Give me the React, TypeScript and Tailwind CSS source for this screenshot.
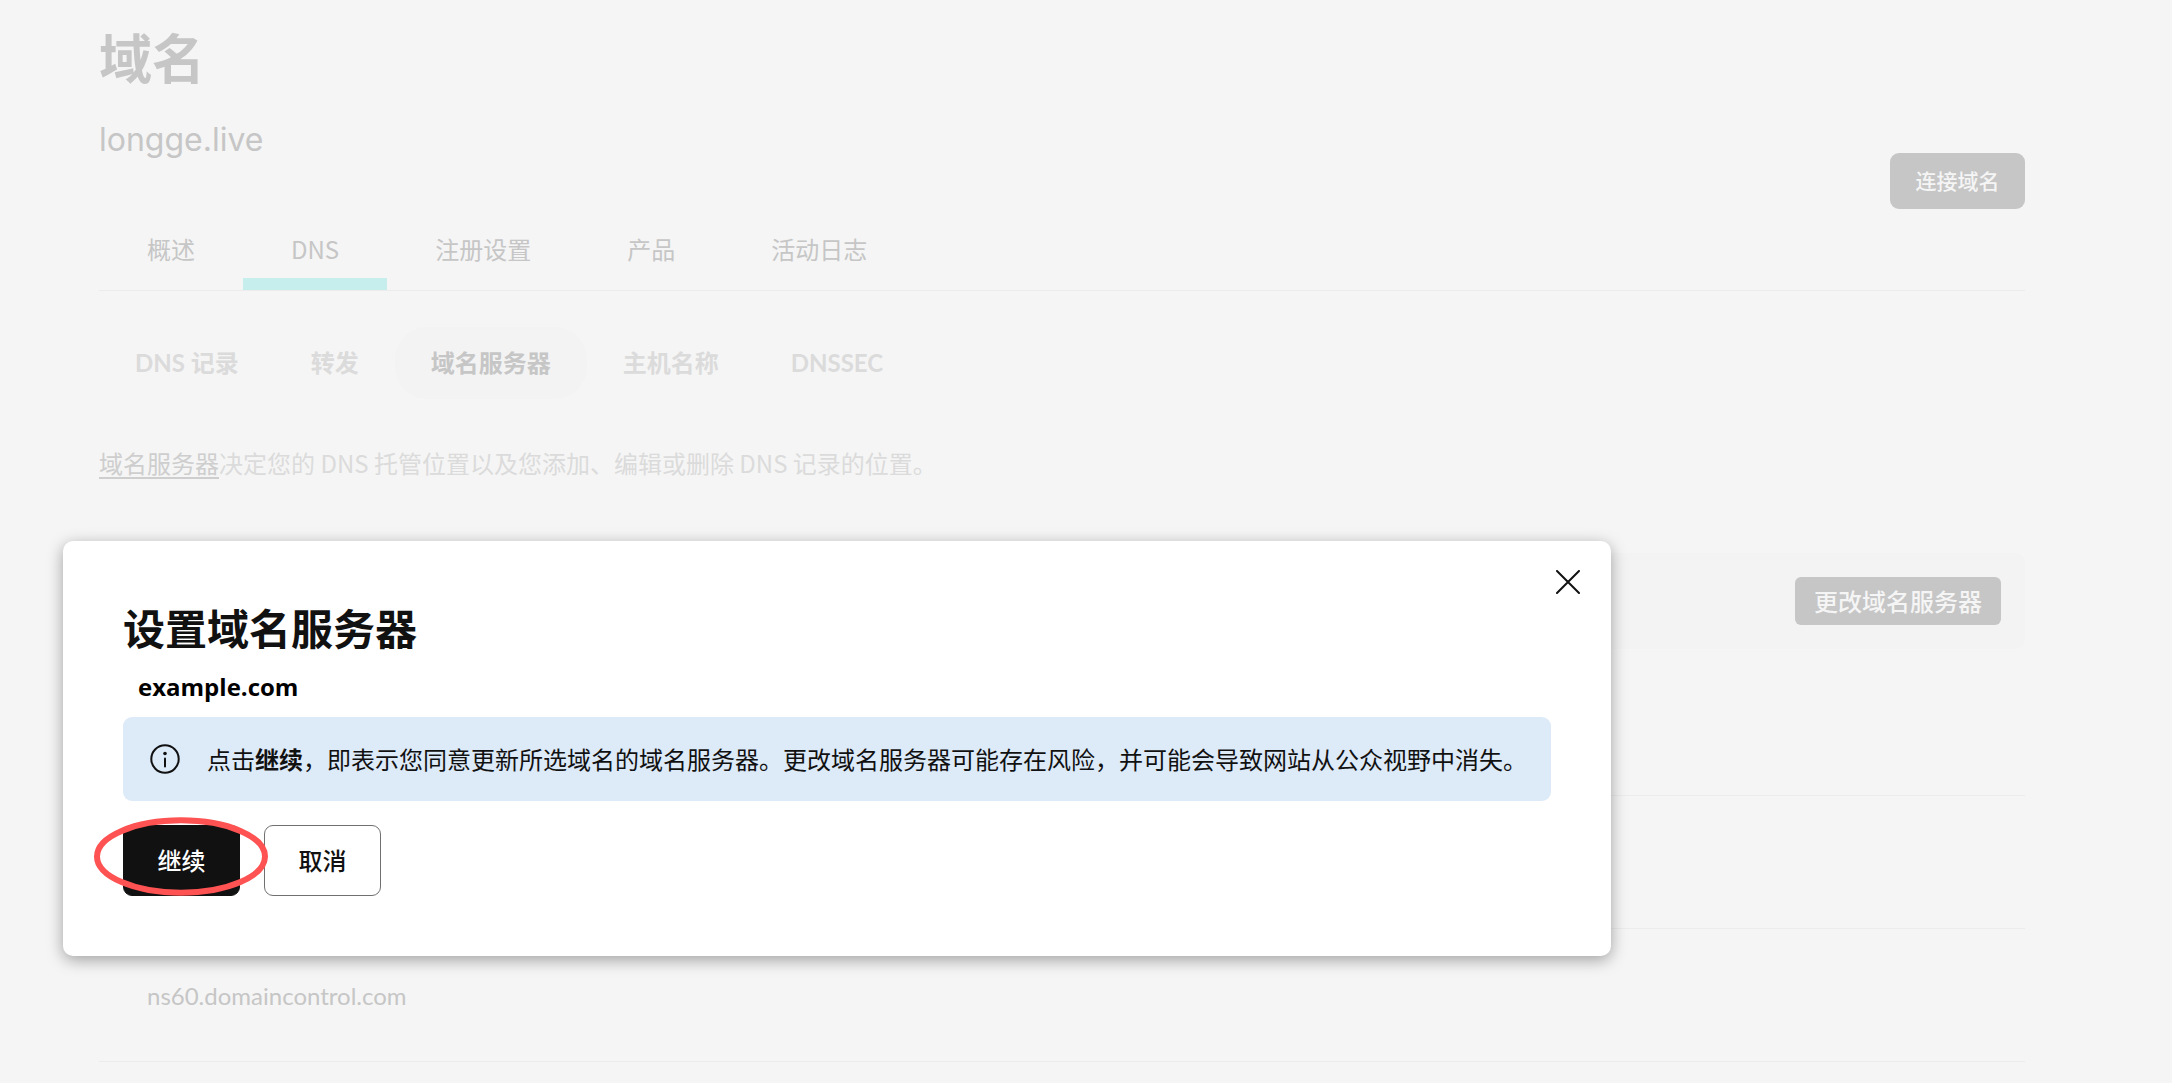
import React from "react";
import clsx from "clsx";

const tabs = ["概述", "DNS", "注册设置", "产品", "活动日志"];
const subTabs = ["DNS 记录", "转发", "域名服务器", "主机名称", "DNSSEC"];
const rows = ["", "", "ns60.domaincontrol.com"];

function ConfirmDialog() {
    return (
        <div
            role="dialog"
            aria-labelledby="dialogTitle"
            className="absolute left-[63px] top-[541px] w-[1548px] max-w-[calc(100%-126px)] rounded-[10px] bg-white p-[60px] text-[#111] shadow-[0_4px_16px_rgba(0,0,0,0.35)]"
        >
            <button aria-label="关闭" className="absolute right-[31px] top-[29px]">
                <svg className="block size-6" viewBox="0 0 24 24" fill="none" stroke="#111" strokeWidth="2" strokeLinecap="round">
                    <path d="M1 1l22 22M23 1L1 23" />
                </svg>
            </button>

            <h2 id="dialogTitle" className="text-[42px] leading-[52px] font-bold">
                设置域名服务器
            </h2>
            <p className="mt-4 pl-[15px] font-['Open_Sans',sans-serif] text-2xl leading-[36px] font-bold text-black">
                example.com
            </p>

            <div className="mt-3 flex min-h-[84px] items-center rounded-[9px] bg-[#ddeaf8] pl-[27px] pr-6">
                <svg className="size-[30px] shrink-0" viewBox="0 0 30 30" fill="none" stroke="#111" strokeWidth="2">
                    <circle cx="15" cy="15" r="13.7" />
                    <path d="M15 14.5v8" strokeLinecap="round" />
                    <circle cx="15" cy="9.5" r="1.8" fill="#111" stroke="none" />
                </svg>
                <p className="ml-[27px] text-2xl leading-9">
                    点击<strong>继续</strong>，即表示您同意更新所选域名的域名服务器。更改域名服务器可能存在风险，并可能会导致网站从公众视野中消失。
                </p>
            </div>

            <div className="mt-6 flex gap-6">
                <div className="relative">
                    <button className="h-[71px] min-w-[117px] rounded-[9px] border border-[#111] bg-[#111] px-8 pb-[2px] text-2xl font-medium text-white">
                        继续
                    </button>
                    <svg
                        className="pointer-events-none absolute -left-[29px] -top-2 h-[79px] w-[174px]"
                        viewBox="0 0 174 79"
                        fill="none"
                        stroke="#ff5252"
                        strokeWidth="6"
                    >
                        <ellipse cx="87" cy="39.5" rx="84" ry="36.2" />
                    </svg>
                </div>
                <button className="h-[71px] min-w-[117px] rounded-[9px] border border-[#707070] bg-white px-8 pb-[2px] text-2xl font-medium">
                    取消
                </button>
            </div>
        </div>
    );
}

function App() {
    return (
        <div className="relative min-h-screen bg-[#f5f5f5] pl-[99px] pr-[147px] font-['Noto_Sans_CJK_SC',sans-serif] text-[#c6c6c6]">
            <header className="flex items-end justify-between pt-5">
                <div>
                    <h1 className="text-[53px] leading-[72px] font-bold">域名</h1>
                    <p className="mt-6 pb-[45px] font-[Inter,sans-serif] text-[32px] leading-[48px]">longge.live</p>
                </div>
                <button className="h-14 min-w-[135px] rounded-[9px] bg-[#c6c6c6] px-6 text-[21px] font-medium text-[#f5f5f5]">
                    连接域名
                </button>
            </header>

            <nav className="flex border-b border-[#ececec]">
                {tabs.map((tab) => (
                    <a
                        key={tab}
                        href="#"
                        className={clsx(
                            "border-b-12 px-12 pt-[21px] pb-[10px] text-2xl leading-[38px]",
                            tab === "DNS" ? "border-[#c6eeed]" : "border-transparent"
                        )}
                    >
                        {tab}
                    </a>
                ))}
            </nav>

            <nav className="mt-9 flex font-[Lato,'Noto_Sans_CJK_SC',sans-serif]">
                {subTabs.map((tab) => (
                    <a
                        key={tab}
                        href="#"
                        className={clsx(
                            "rounded-[32px] px-9 py-[18px] text-2xl leading-9 font-bold",
                            tab === "域名服务器" ? "bg-[#f3f3f3]" : "text-[#dbdbdb]"
                        )}
                    >
                        {tab}
                    </a>
                ))}
            </nav>

            <p className="mt-[46px] text-2xl leading-9 text-[#dbdbdb]">
                <a href="#" className="text-[#cecece] underline decoration-2 underline-offset-4">
                    域名服务器
                </a>
                决定您的 DNS 托管位置以及您添加、编辑或删除 DNS 记录的位置。
            </p>

            <div className="mt-[72px] flex justify-end rounded-[10px] bg-[#f3f3f3] p-6">
                <button className="h-12 rounded-[6px] bg-[#c6c6c6] px-[19px] text-2xl font-medium text-[#f5f5f5]">
                    更改域名服务器
                </button>
            </div>

            <table className="mt-[13px] w-full text-left">
                <tbody>
                    {rows.map((row, i) => (
                        <tr key={i} className="h-[133px] border-b border-[#ececec]">
                            <td className="pt-[2px] pl-12 font-[Lato,sans-serif] text-2xl">{row}</td>
                        </tr>
                    ))}
                </tbody>
            </table>

            <ConfirmDialog />
        </div>
    );
}

export default App;
